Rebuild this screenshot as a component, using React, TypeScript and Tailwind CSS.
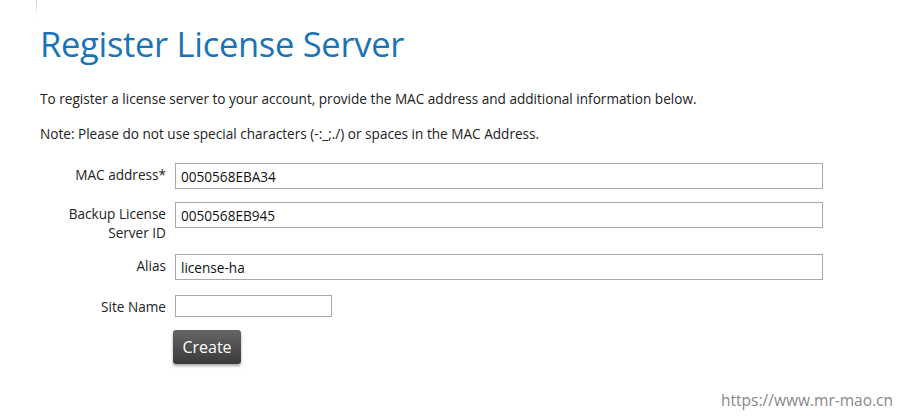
import React from "react";

const fields = [
  { label: "MAC address*", value: "0050568EBA34", wide: true, gap: "mb-[13px]" },
  { label: "Backup License Server ID", value: "0050568EB945", wide: true, gap: "mb-[12px]" },
  { label: "Alias", value: "license-ha", wide: true, gap: "mb-[15px]" },
  { label: "Site Name", value: "", wide: false, gap: "mb-[13px]" },
];

const font = '"Open Sans", "Noto Sans", sans-serif';

export default function App() {
  return (
    <div
      className="relative w-[901px] h-[416px] bg-white overflow-hidden text-[#222]"
      style={{ fontFamily: font }}
    >
      {/* left edge shadow line */}
      <div className="absolute left-[36px] top-0 w-px h-[18px] bg-gradient-to-b from-[#d0d0d0] to-transparent" />

      <div className="pl-[40px] pt-[22px]">
        <h1 className="text-[34.5px] leading-[44px] text-[#1a73b8] tracking-[-0.3px]">
          Register License Server
        </h1>

        <p className="mt-[24px] text-[13.6px] leading-[18px]">
          To register a license server to your account, provide the MAC address and additional information below.
        </p>
        <p className="mt-[17px] text-[13.6px] leading-[18px]">
          Note: Please do not use special characters (-:_;./) or spaces in the MAC Address.
        </p>

        <div className="mt-[20px] flex flex-col text-[13.6px]">
          {fields.map((f) => (
            <div key={f.label} className={"flex items-start " + f.gap}>
              <label className="w-[126px] text-right leading-[19px] pt-[2px]">
                {f.label === "Backup License Server ID" ? (
                  <>
                    Backup License
                    <br />
                    Server ID
                  </>
                ) : (
                  f.label
                )}
              </label>
              <input
                readOnly
                value={f.value}
                className={
                  "ml-[9px] border border-[#a9a9a9] px-[5px] text-[13.6px] text-[#111] outline-none " +
                  (f.wide ? "w-[648px] h-[26px]" : "w-[157px] h-[22px]")
                }
                style={{ fontFamily: font }}
              />
            </div>
          ))}

          <div className="pl-[133px]">
            <button className="w-[68px] h-[34px] rounded-[3px] bg-gradient-to-b from-[#666] to-[#3a3a3a] text-white text-[16px] shadow-[0_2px_3px_rgba(0,0,0,0.35)]">
              Create
            </button>
          </div>
        </div>
      </div>

      <div className="absolute right-[8px] bottom-[4px] text-[15.5px] text-[#888]">
        https://www.mr-mao.cn
      </div>
    </div>
  );
}
